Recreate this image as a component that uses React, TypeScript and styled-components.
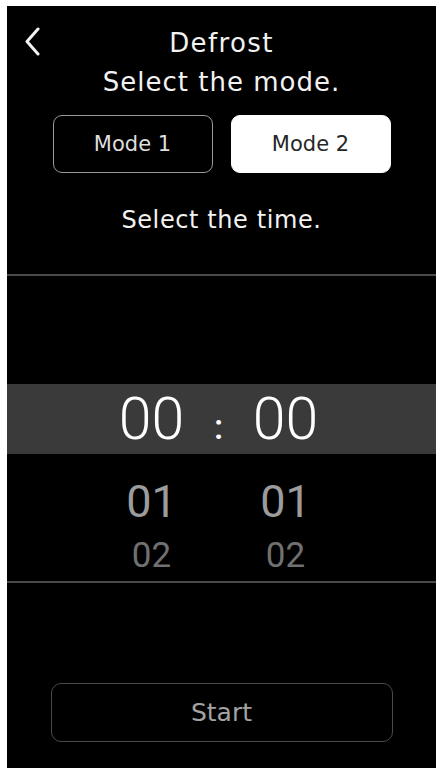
import React from 'react';
import styled, { createGlobalStyle } from 'styled-components';

const GlobalStyle = createGlobalStyle`
    html, body {
        margin: 0;
        padding: 0;
        background: #ffffff;
    }
`;

const Screen = styled.div`
    margin: 6px 0 0 7px;
    width: 429px;
    height: 762px;
    background: #000000;
    display: flex;
    flex-direction: column;
    font-family: 'DejaVu Sans', 'Open Sans', sans-serif;
    color: #f2f2f2;
    overflow: hidden;
`;

const Header = styled.div`
    display: grid;
    grid-template-columns: 60px 1fr 60px;
    align-items: start;
    padding-top: 18px;
`;

const BackButton = styled.button`
    background: none;
    border: none;
    padding: 3px 0 0 17px;
    margin: 0;
    width: 40px;
    display: flex;
    cursor: pointer;
`;

const TitleBlock = styled.div`
    text-align: center;
`;

const TitleLine = styled.div<{ $spacing?: number }>`
    font-size: 26px;
    line-height: 39px;
    letter-spacing: ${(p) => p.$spacing ?? 1}px;
    white-space: nowrap;
`;

const ModeRow = styled.div`
    display: flex;
    justify-content: center;
    gap: 18px;
    margin-top: 13px;
`;

const ModeButton = styled.button<{ $active?: boolean }>`
    width: 160px;
    height: 58px;
    border-radius: 9px;
    border: 1.5px solid ${(p) => (p.$active ? '#ffffff' : '#9a9a9a')};
    background: ${(p) => (p.$active ? '#ffffff' : '#000000')};
    color: ${(p) => (p.$active ? '#262626' : '#dedede')};
    font-family: 'DejaVu Sans', 'Open Sans', sans-serif;
    font-size: 21px;
    padding: 0;
    cursor: pointer;
`;

const Subtitle = styled.div`
    margin-top: 32px;
    text-align: center;
    font-size: 24px;
    line-height: 30px;
    letter-spacing: 0.6px;
`;

const Picker = styled.div`
    margin-top: 39px;
    border-top: 2px solid #4a4a4a;
    border-bottom: 2px solid #4a4a4a;
    padding: 108px 0 7px;
    font-family: Roboto, 'Liberation Sans', sans-serif;
`;

const PickerRow = styled.div<{ $selected?: boolean; $size: number; $lh: number; $gap: number; $color: string }>`
    display: grid;
    grid-template-columns: 100px 34px 100px;
    justify-content: center;
    align-items: baseline;
    padding-right: 6px;
    margin-top: ${(p) => p.$gap}px;
    height: ${(p) => p.$lh}px;
    background: ${(p) => (p.$selected ? '#3a3a3a' : 'transparent')};
    color: ${(p) => p.$color};
    font-size: ${(p) => p.$size}px;
    line-height: ${(p) => p.$lh}px;
    font-weight: ${(p) => (p.$selected ? 300 : 400)};
`;

const Cell = styled.span`
    text-align: center;
`;

const Colon = styled.span`
    text-align: center;
    font-size: 35px;
    line-height: 1;
    font-weight: 500;
`;

const Footer = styled.div`
    margin-top: auto;
    padding: 0 0 26px;
    display: flex;
    justify-content: center;
`;

const StartButton = styled.button`
    width: 342px;
    height: 59px;
    border-radius: 10px;
    border: 1.5px solid #4a4a4a;
    background: #000000;
    color: #a3a3a3;
    font-family: 'DejaVu Sans', 'Open Sans', sans-serif;
    font-size: 25px;
    padding: 0;
    cursor: pointer;
`;

function BackIcon() {
    return (
        <svg width="17" height="29" viewBox="0 0 17 29" fill="none">
            <polyline points="14,2 3,14.5 14,27" stroke="#f2f2f2" strokeWidth="3" strokeLinecap="round" strokeLinejoin="round" />
        </svg>
    );
}

const rows = [
    { value: '00', selected: true, size: 59, lh: 70, gap: 0, color: '#ffffff' },
    { value: '01', selected: false, size: 45, lh: 44, gap: 26, color: '#9c9c9c' },
    { value: '02', selected: false, size: 35, lh: 36, gap: 14, color: '#707070' },
];

export default function App() {
    return (
        <>
            <GlobalStyle />
            <Screen>
                <Header>
                    <BackButton aria-label="Back">
                        <BackIcon />
                    </BackButton>
                    <TitleBlock>
                        <TitleLine $spacing={1.4}>Defrost</TitleLine>
                        <TitleLine>Select the mode.</TitleLine>
                    </TitleBlock>
                    <div />
                </Header>

                <ModeRow>
                    <ModeButton>Mode 1</ModeButton>
                    <ModeButton $active>Mode 2</ModeButton>
                </ModeRow>

                <Subtitle>Select the time.</Subtitle>

                <Picker>
                    {rows.map((r) => (
                        <PickerRow key={r.value} $selected={r.selected} $size={r.size} $lh={r.lh} $gap={r.gap} $color={r.color}>
                            <Cell>{r.value}</Cell>
                            {r.selected ? <Colon>:</Colon> : <span />}
                            <Cell>{r.value}</Cell>
                        </PickerRow>
                    ))}
                </Picker>

                <Footer>
                    <StartButton>Start</StartButton>
                </Footer>
            </Screen>
        </>
    );
}
